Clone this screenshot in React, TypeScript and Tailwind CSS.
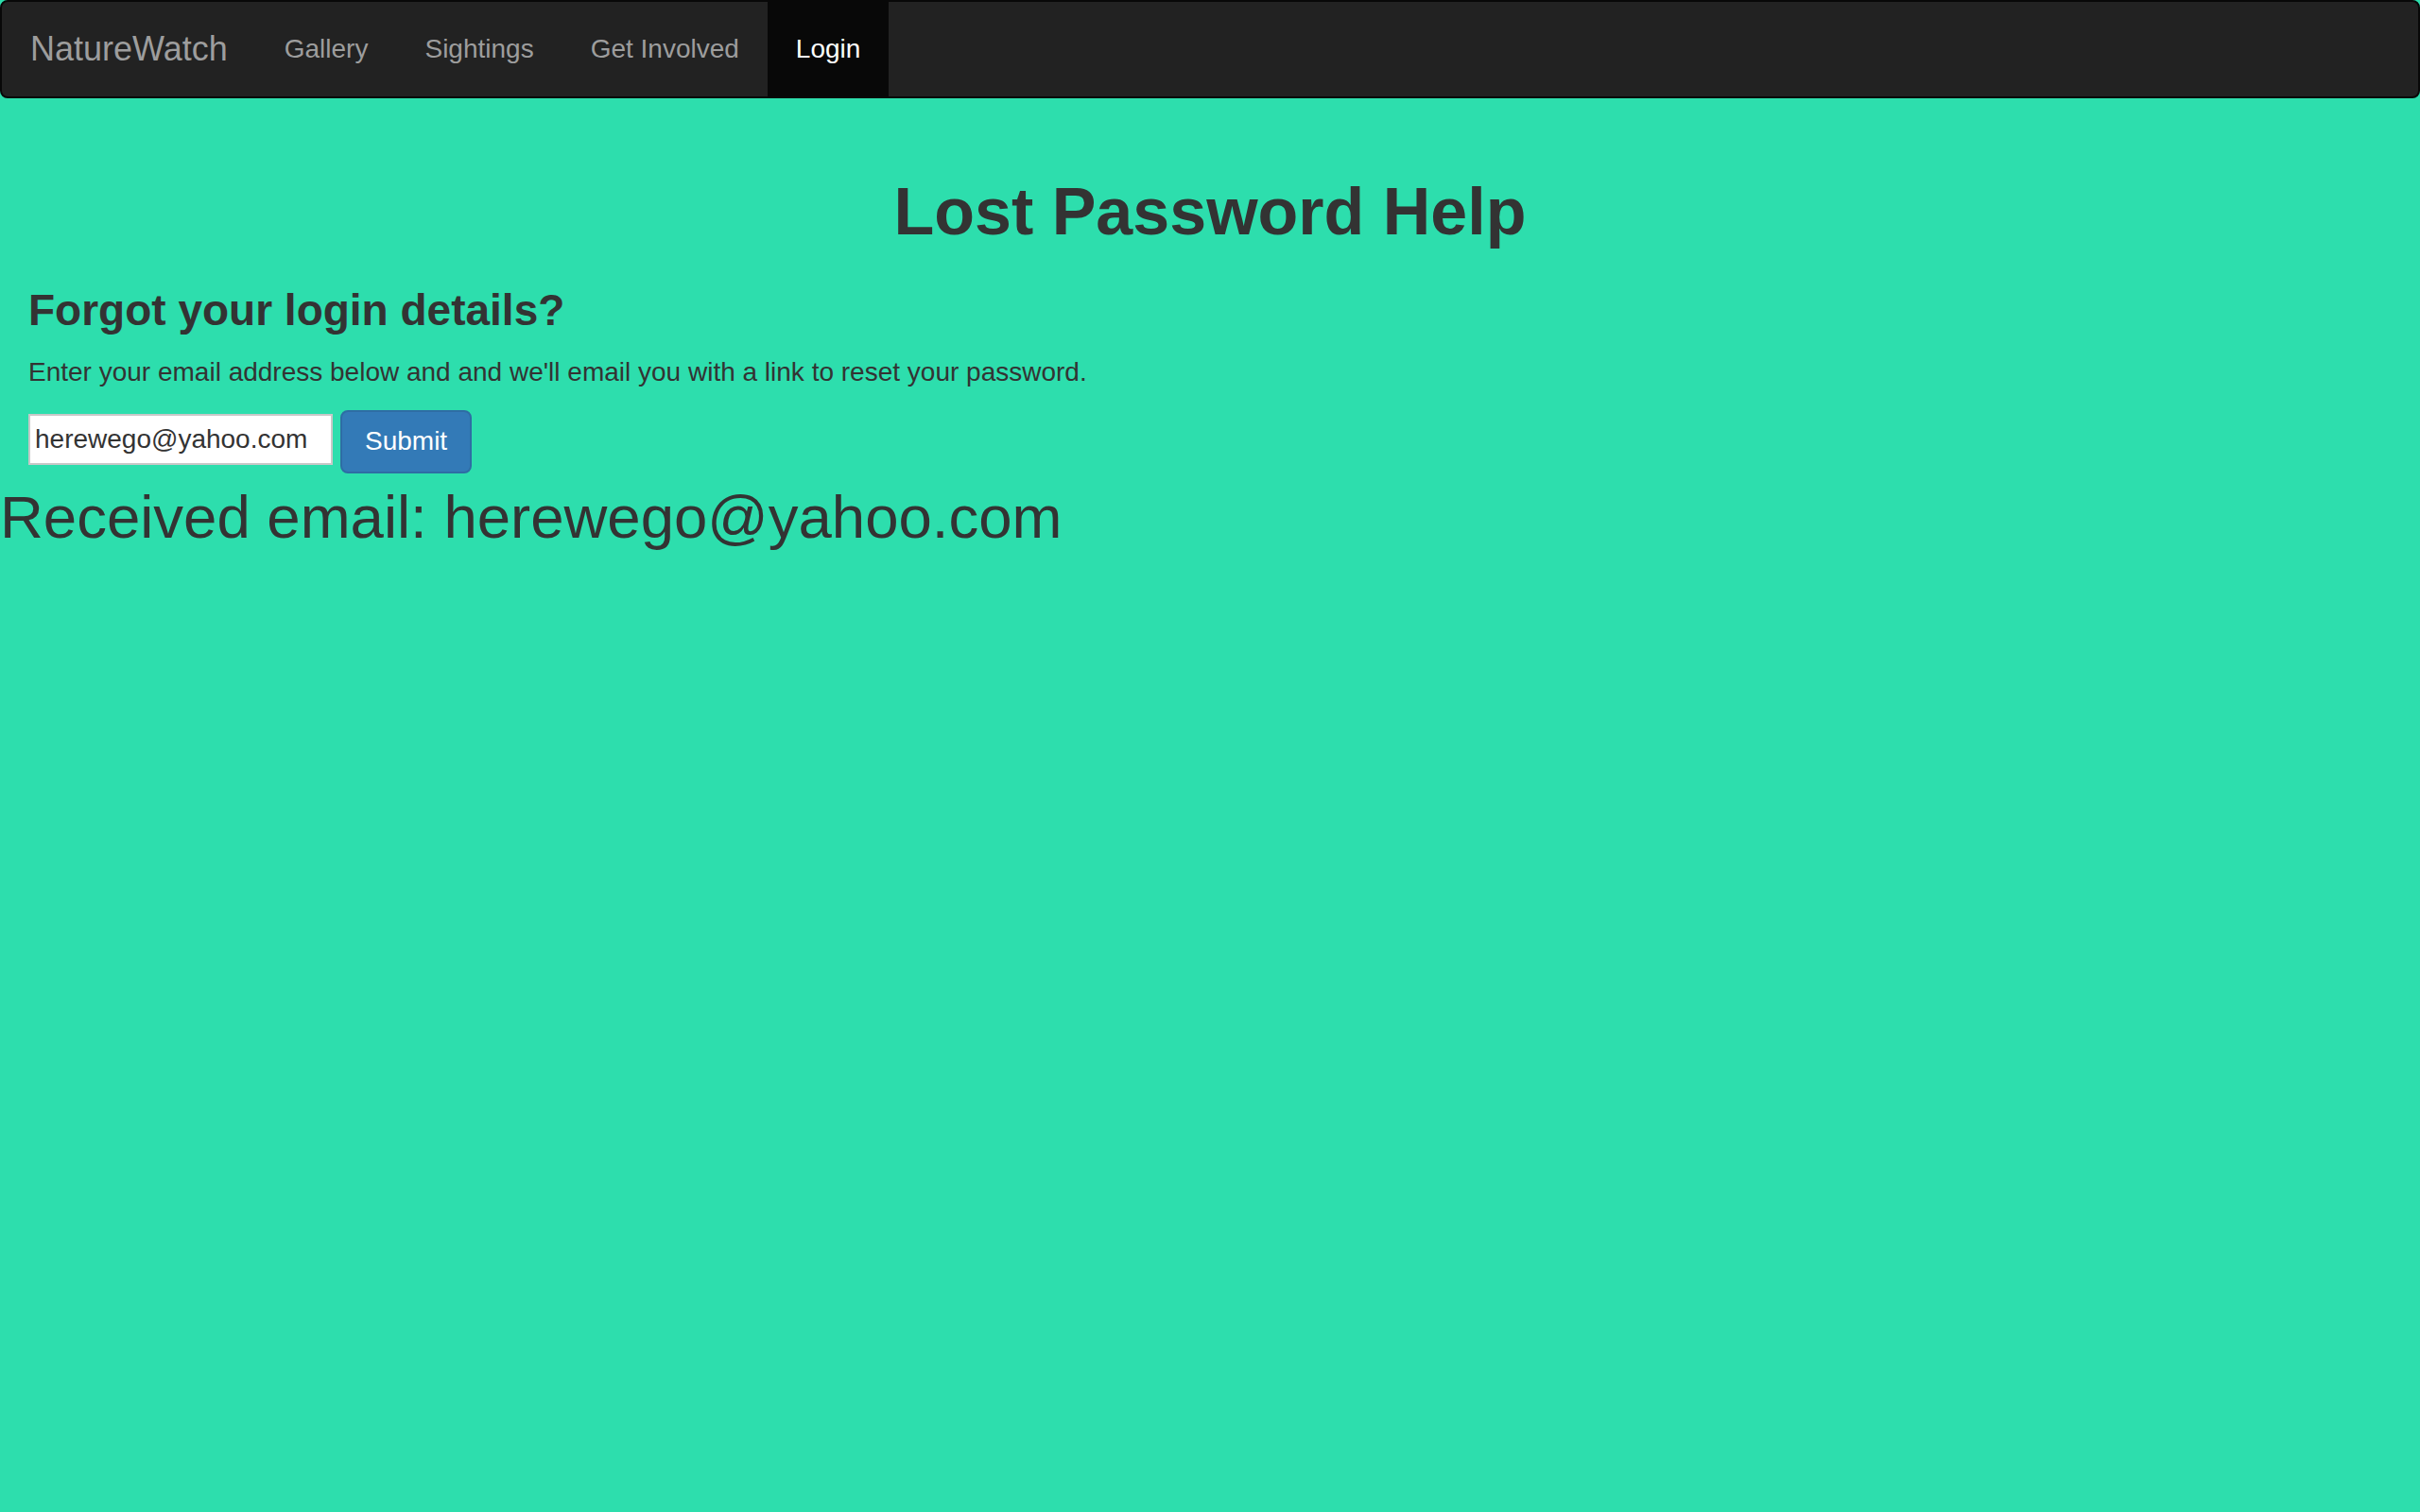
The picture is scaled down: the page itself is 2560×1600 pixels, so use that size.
export default function App() {
  const links = ['Gallery', 'Sightings', 'Get Involved'];

  return (
    <div className="min-h-screen bg-[#2ddead] text-[#333] font-['Liberation_Sans',Arial,sans-serif]">
      {/* Navbar */}
      <nav className="flex h-[104px] items-stretch rounded-[8px] border-2 border-[#080808] bg-[#222]">
        <a className="px-[30px] py-[30px] text-[36px] leading-[40px] text-[#9d9d9d]">NatureWatch</a>
        <ul className="flex">
          {links.map((l) => (
            <li key={l}>
              <a className="block px-[30px] py-[30px] text-[28px] leading-[40px] text-[#9d9d9d]">{l}</a>
            </li>
          ))}
          <li>
            <a className="block bg-[#080808] px-[30px] py-[30px] text-[28px] leading-[40px] text-white">Login</a>
          </li>
        </ul>
      </nav>

      <div className="px-[30px] pt-[42px]">
        <h1 className="mt-[40px] mb-[20px] text-center text-[70px] font-bold leading-[1.1]">Lost Password Help</h1>
        <h3 className="mt-[40px] mb-[20px] text-[46px] font-bold leading-[1.1]">Forgot your login details?</h3>
        <p className="mb-[20px] text-[28px] leading-[40px]">
          Enter your email address below and and we'll email you with a link to reset your password.
        </p>
        <form className="flex items-start gap-[8px]" onSubmit={(e) => e.preventDefault()}>
          <input
            type="email"
            defaultValue="herewego@yahoo.com"
            className="mt-[4px] h-[54px] w-[322px] border-2 border-[#c8c8c8] bg-white px-[5px] text-[28px] text-[#333] outline-none"
          />
          <button
            type="submit"
            className="h-[67px] rounded-[8px] border-2 border-[#2e6da4] bg-[#337ab7] px-[24px] text-[28px] leading-[40px] text-white"
          >
            Submit
          </button>
        </form>
      </div>

      <h2 className="mt-[12px] text-[63.5px] leading-[1.1]">Received email: herewego@yahoo.com</h2>
    </div>
  );
}
